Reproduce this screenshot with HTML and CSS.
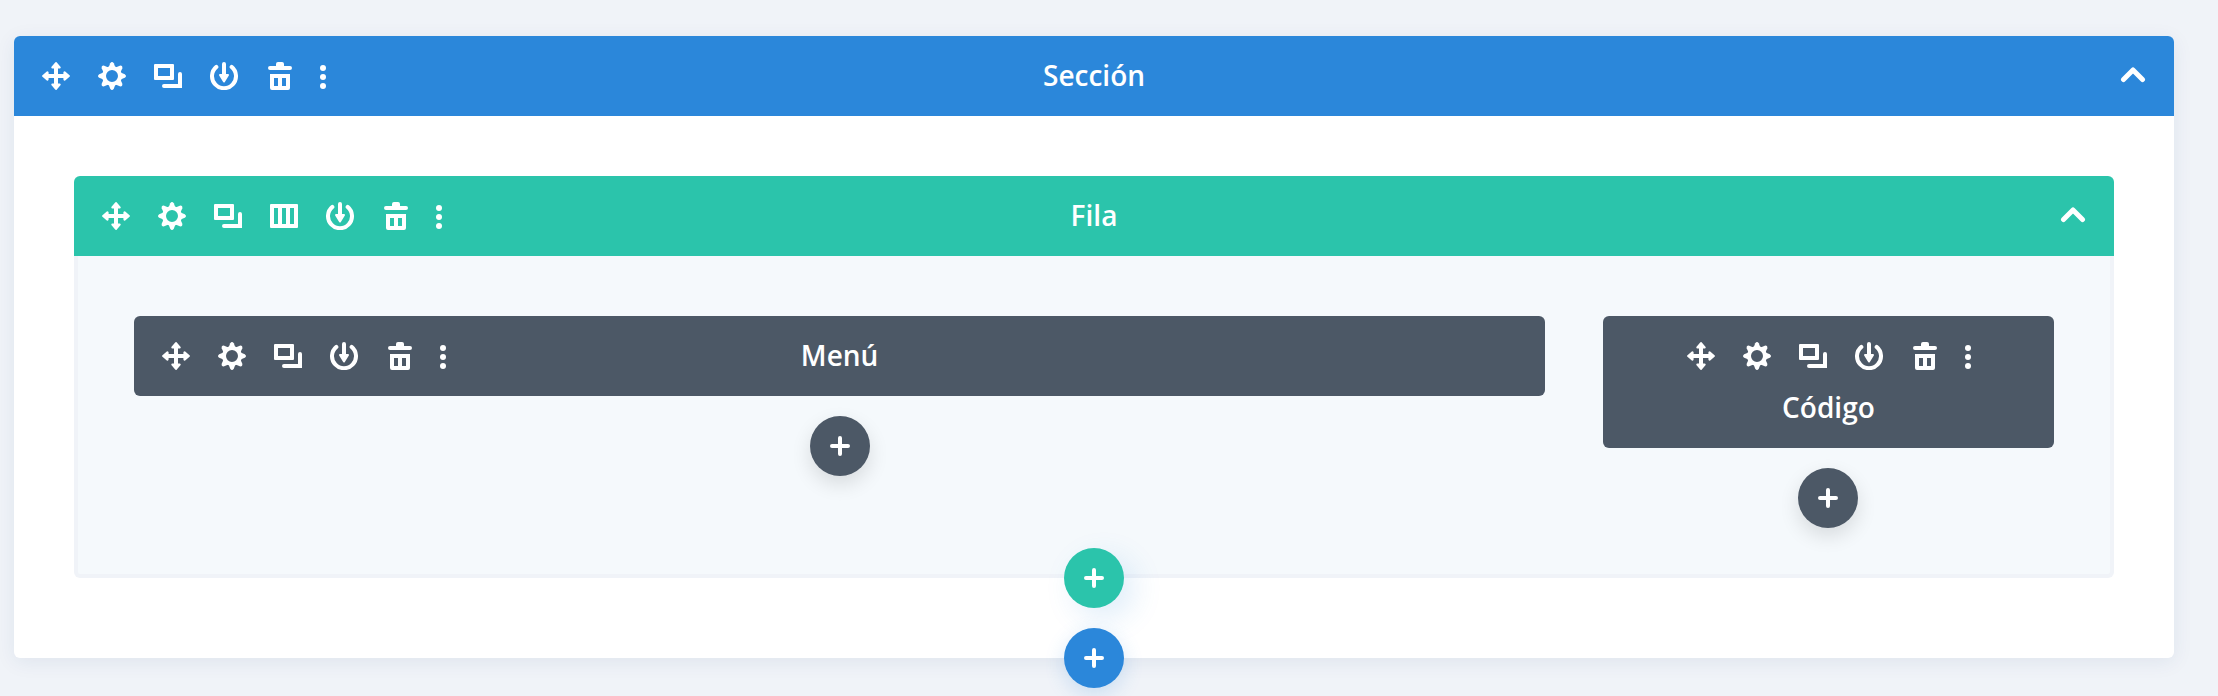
FILE: index.html
```html
<!DOCTYPE html>
<html lang="es">
<head>
    <meta charset="UTF-8">
    <meta name="viewport" content="width=device-width, initial-scale=1.0">
    <title>Constructor</title>
    <link rel="stylesheet" href="styles.css">
</head>
<body>

<svg class="sprite" aria-hidden="true">
    <symbol id="move" viewBox="0 0 28 28">
        <path d="M14 4v20M4 14h20" fill="none" stroke="currentColor" stroke-width="4"/>
        <path d="M14 1.2l3.6 4.3h-7.2zM14 26.8l3.6-4.3h-7.2zM1.2 14l4.3-3.6v7.2zM26.8 14l-4.3-3.6v7.2z" stroke="currentColor" stroke-width="2.2" stroke-linejoin="round"/>
    </symbol>
    <symbol id="gear" viewBox="0 0 28 28">
        <circle cx="14" cy="14" r="8" fill="none" stroke="currentColor" stroke-width="4"/>
        <g id="teeth">
            <path id="tooth" d="M10.6 5.5L12.2 1.2Q14-1.2 15.8 1.2L17.4 5.5z"/>
            <use href="#tooth" transform="rotate(90 14 14)"/>
            <use href="#tooth" transform="rotate(180 14 14)"/>
            <use href="#tooth" transform="rotate(270 14 14)"/>
        </g>
        <use href="#teeth" transform="rotate(45 14 14)"/>
    </symbol>
    <symbol id="clone" viewBox="0 0 28 28">
        <path fill-rule="evenodd" d="M1 2h18a1 1 0 0 1 1 1v14a1 1 0 0 1-1 1H1a1 1 0 0 1-1-1V3a1 1 0 0 1 1-1zM4 6v8h12V6z"/>
        <path d="M26 12v12H10" fill="none" stroke="currentColor" stroke-width="4" stroke-linecap="round"/>
    </symbol>
    <symbol id="columns" viewBox="0 0 28 28">
        <path fill-rule="evenodd" d="M1 2h26a1 1 0 0 1 1 1v22a1 1 0 0 1-1 1H1a1 1 0 0 1-1-1V3a1 1 0 0 1 1-1zM4 6v16h4V6zM12 6v16h4V6zM20 6v16h4V6z"/>
    </symbol>
    <symbol id="save" viewBox="0 0 28 28">
        <path d="M6.4 4.9a12 12 0 1 0 15.2 0M14 2v12" fill="none" stroke="currentColor" stroke-width="4" stroke-linecap="round"/>
        <path d="M10 13h8l-4 6.5z" stroke="currentColor" stroke-width="2" stroke-linejoin="round"/>
    </symbol>
    <symbol id="trash" viewBox="0 0 28 28">
        <path d="M10 4V2a2 2 0 0 1 2-2h4a2 2 0 0 1 2 2v2h6a2 2 0 0 1 0 4H4a2 2 0 0 1 0-4z"/>
        <path fill-rule="evenodd" d="M4 12h20v14a2 2 0 0 1-2 2H6a2 2 0 0 1-2-2zM8 16v8h4v-8zM16 16v8h4v-8z"/>
    </symbol>
    <symbol id="dots" viewBox="0 0 28 28">
        <circle cx="14" cy="6" r="3"/>
        <circle cx="14" cy="15" r="3"/>
        <circle cx="14" cy="24" r="3"/>
    </symbol>
    <symbol id="chevron" viewBox="0 0 28 28">
        <path d="M5.5 17.5L15 8l9.5 9.5" fill="none" stroke="currentColor" stroke-width="5" stroke-linecap="round" stroke-linejoin="round"/>
    </symbol>
    <symbol id="plus" viewBox="0 0 20 20">
        <path d="M10 2v16M2 10h16" fill="none" stroke="currentColor" stroke-width="4" stroke-linecap="round"/>
    </symbol>
</svg>

<main class="section">
    <header class="bar section-bar">
        <div class="toolbar">
            <button type="button" aria-label="Mover"><svg><use href="#move"/></svg></button>
            <button type="button" aria-label="Ajustes"><svg><use href="#gear"/></svg></button>
            <button type="button" aria-label="Duplicar"><svg><use href="#clone"/></svg></button>
            <button type="button" aria-label="Guardar"><svg><use href="#save"/></svg></button>
            <button type="button" aria-label="Eliminar"><svg><use href="#trash"/></svg></button>
            <button type="button" class="more" aria-label="Más"><svg><use href="#dots"/></svg></button>
        </div>
        <span class="title">Sección</span>
        <button type="button" class="toggle" aria-label="Contraer"><svg><use href="#chevron"/></svg></button>
    </header>

    <div class="section-body">
        <div class="row">
            <header class="bar row-bar">
                <div class="toolbar">
                    <button type="button" aria-label="Mover"><svg><use href="#move"/></svg></button>
                    <button type="button" aria-label="Ajustes"><svg><use href="#gear"/></svg></button>
                    <button type="button" aria-label="Duplicar"><svg><use href="#clone"/></svg></button>
                    <button type="button" aria-label="Columnas"><svg><use href="#columns"/></svg></button>
                    <button type="button" aria-label="Guardar"><svg><use href="#save"/></svg></button>
                    <button type="button" aria-label="Eliminar"><svg><use href="#trash"/></svg></button>
                    <button type="button" class="more" aria-label="Más"><svg><use href="#dots"/></svg></button>
                </div>
                <span class="title">Fila</span>
                <button type="button" class="toggle" aria-label="Contraer"><svg><use href="#chevron"/></svg></button>
            </header>

            <div class="row-body">
                <div class="column column-wide">
                    <div class="bar module">
                        <div class="toolbar">
                            <button type="button" aria-label="Mover"><svg><use href="#move"/></svg></button>
                            <button type="button" aria-label="Ajustes"><svg><use href="#gear"/></svg></button>
                            <button type="button" aria-label="Duplicar"><svg><use href="#clone"/></svg></button>
                            <button type="button" aria-label="Guardar"><svg><use href="#save"/></svg></button>
                            <button type="button" aria-label="Eliminar"><svg><use href="#trash"/></svg></button>
                            <button type="button" class="more" aria-label="Más"><svg><use href="#dots"/></svg></button>
                        </div>
                        <span class="title">Menú</span>
                    </div>
                    <button type="button" class="add add-module" aria-label="Añadir módulo"><svg><use href="#plus"/></svg></button>
                </div>

                <div class="column column-narrow">
                    <div class="bar module stacked">
                        <div class="toolbar">
                            <button type="button" aria-label="Mover"><svg><use href="#move"/></svg></button>
                            <button type="button" aria-label="Ajustes"><svg><use href="#gear"/></svg></button>
                            <button type="button" aria-label="Duplicar"><svg><use href="#clone"/></svg></button>
                            <button type="button" aria-label="Guardar"><svg><use href="#save"/></svg></button>
                            <button type="button" aria-label="Eliminar"><svg><use href="#trash"/></svg></button>
                            <button type="button" class="more" aria-label="Más"><svg><use href="#dots"/></svg></button>
                        </div>
                        <span class="title">Código</span>
                    </div>
                    <button type="button" class="add add-module" aria-label="Añadir módulo"><svg><use href="#plus"/></svg></button>
                </div>
            </div>
        </div>
        <button type="button" class="add add-row" aria-label="Añadir fila"><svg><use href="#plus"/></svg></button>
        <button type="button" class="add add-section" aria-label="Añadir sección"><svg><use href="#plus"/></svg></button>
    </div>
</main>

</body>
</html>
```
FILE: styles.css
```css
* {
    box-sizing: border-box;
}
body {
    margin: 0;
    padding: 36px 44px 38px 14px;
    background-color: #f0f3f8;
    font-family: "Open Sans", sans-serif;
    color: #fff;
}
button {
    display: flex;
    align-items: center;
    justify-content: center;
    padding: 0;
    border: none;
    background: none;
    color: inherit;
    cursor: pointer;
}
svg {
    display: block;
    width: 28px;
    height: 28px;
    fill: currentColor;
}
.sprite {
    position: absolute;
    width: 0;
    height: 0;
}

/* bars */
.bar {
    display: grid;
    grid-template-columns: 1fr auto 1fr;
    align-items: center;
    padding: 26px 14px;
}
.toolbar {
    display: flex;
}
.toolbar button {
    width: 56px;
}
.toolbar .more {
    width: 30px;
}
.title {
    padding-bottom: 2px;
    font-size: 28px;
    font-weight: 600;
    line-height: 26px;
    text-align: center;
}
.toggle {
    justify-self: end;
    width: 56px;
}

/* section */
.section {
    border-radius: 6px;
    background-color: #fff;
    box-shadow: 0 4px 20px rgba(30, 70, 110, 0.08);
}
.section-bar {
    border-radius: 6px 6px 0 0;
    background-color: #2b87da;
}
.section-body {
    display: flex;
    flex-direction: column;
    align-items: center;
    padding: 60px 60px 0;
}

/* row */
.row {
    width: 100%;
}
.row-bar {
    border-radius: 6px 6px 0 0;
    background-color: #2bc4ab;
}
.row-body {
    display: flex;
    justify-content: space-between;
    align-items: flex-start;
    padding: 60px 56px 46px;
    border: 4px solid #f0f3f8;
    border-top: none;
    border-radius: 0 0 6px 6px;
    background-color: #f5f9fc;
}
.column {
    display: flex;
    flex-direction: column;
    align-items: center;
    gap: 20px;
}
.column-wide {
    width: 73.5%;
}
.column-narrow {
    width: 23.5%;
}

/* modules */
.module {
    width: 100%;
    border-radius: 6px;
    background-color: #4c5866;
}
.stacked {
    grid-template-columns: 1fr;
    justify-items: center;
    row-gap: 24px;
}

/* add buttons */
.add {
    width: 60px;
    height: 60px;
    border-radius: 50%;
}
.add svg {
    width: 20px;
    height: 20px;
}
.add-module {
    background-color: #4c5866;
    box-shadow: 0 8px 20px rgba(0, 0, 0, 0.12);
}
.add-row {
    margin-top: -30px;
    background-color: #2bc4ab;
    box-shadow: 10px 10px 30px rgba(43, 135, 218, 0.15);
}
.add-section {
    margin-top: 20px;
    margin-bottom: -30px;
    background-color: #2b87da;
    box-shadow: 0 6px 20px rgba(43, 135, 218, 0.2);
}
```
